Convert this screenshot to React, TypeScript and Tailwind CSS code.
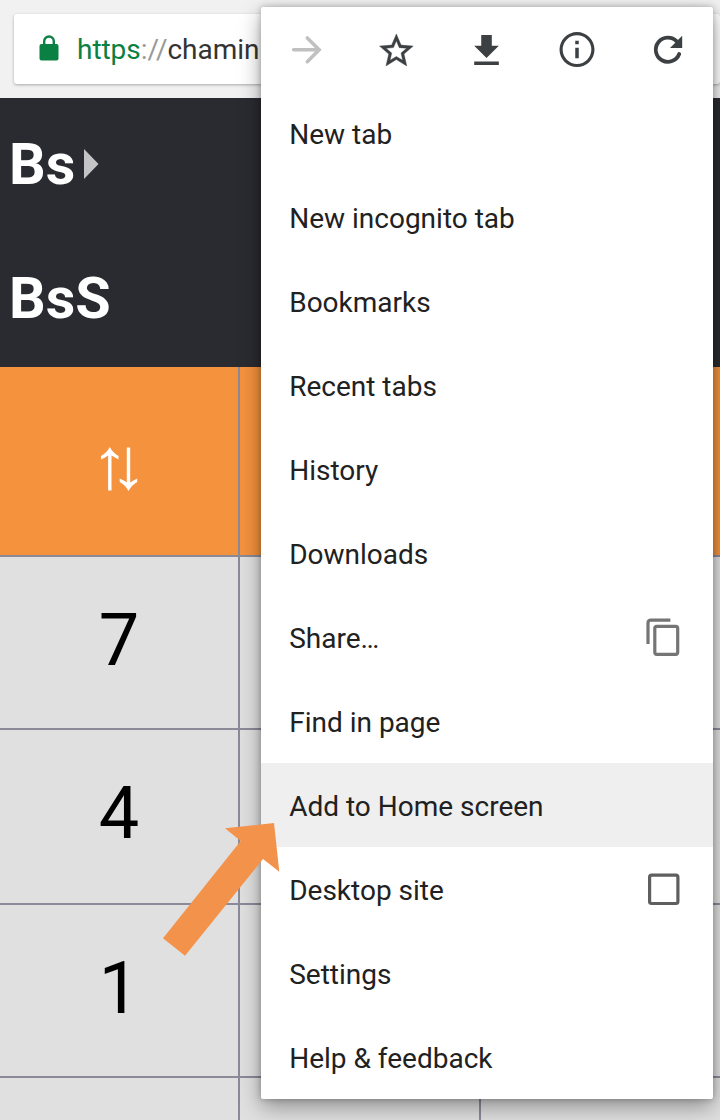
import type { ReactNode } from "react";

const roboto = "font-['Roboto',sans-serif]";

const tools: { label: string; icon: ReactNode }[] = [
  {
    label: "Forward",
    icon: (
      <path d="M8.6 21.8H34M22.3 9.9L34.2 21.8L22.3 33.7" fill="none" stroke="#c0c0c0" strokeWidth="3.5" strokeLinecap="round" />
    ),
  },
  {
    label: "Bookmark",
    icon: (
      <path transform="translate(.2 2.6) scale(1.68)" fill="#3c4043" stroke="#3c4043" strokeWidth=".25" d="M22 9.24l-7.19-.62L12 2 9.19 8.63 2 9.24l5.46 4.73L5.82 21 12 17.27 18.18 21l-1.63-7.03L22 9.24zM12 15.4l-3.76 2.27 1-4.28-3.32-2.88 4.38-.38L12 6.1l1.71 4.04 4.38.38-3.32 2.88 1 4.28L12 15.4z" />
    ),
  },
  {
    label: "Download",
    icon: <path transform="translate(-.6 1.8) scale(1.76)" fill="#3c4043" d="M19 9h-4V3H9v6H5l7 7 7-7zM5 18v2h14v-2H5z" />,
  },
  {
    label: "Page info",
    icon: (
      <g transform="translate(0 .6) scale(1.75)" fill="#3c4043">
        <path d="M11 7h2v2h-2zM11 11h2v6h-2zM12 2a10 10 0 1 0 0 20 10 10 0 0 0 0-20zm0 18.2a8.2 8.2 0 1 1 0-16.4 8.2 8.2 0 0 1 0 16.4z" />
      </g>
    ),
  },
  {
    label: "Refresh",
    icon: (
      <>
        <path d="M32.2 26A12.1 12.1 0 1 1 29.7 13.4" fill="none" stroke="#3c4043" strokeWidth="3.8" strokeLinecap="round" />
        <path d="M35.2 7.7V19.9H23z" fill="#3c4043" />
      </>
    ),
  },
];

const items = [
  "New tab",
  "New incognito tab",
  "Bookmarks",
  "Recent tabs",
  "History",
  "Downloads",
  "Share…",
  "Find in page",
  "Add to Home screen",
  "Desktop site",
  "Settings",
  "Help & feedback",
];

function ItemIcon({ item }: { item: string }) {
  if (item === "Share…")
    return (
      <svg className="h-10 w-9" viewBox="0 0 36 40" fill="none" stroke="#757575" strokeWidth="3.2">
        <path d="M3 27V6Q3 3.1 5.9 3.1H25.4" />
        <rect x="9.8" y="9.3" width="22.9" height="28" rx="2" />
      </svg>
    );
  if (item === "Desktop site")
    return (
      <svg className="h-10 w-9" viewBox="0 0 36 40" fill="none" stroke="#5f5f5f" strokeWidth="3.2">
        <rect x="4.6" y="6.2" width="28.3" height="28.3" rx="2" />
      </svg>
    );
  return null;
}

function Menu() {
  return (
    <div className="absolute left-[261px] top-[7px] h-[1092px] w-[452px] rounded-[2px] bg-white shadow-[0_8px_22px_rgba(0,0,0,0.36),0_0_6px_rgba(0,0,0,0.25)]">
      <div className="grid h-[84px] grid-cols-5">
        {tools.map((t) => (
          <button key={t.label} aria-label={t.label} className="flex items-center justify-center">
            <svg className="h-[42px] w-[42px]" viewBox="0 0 42 42">
              {t.icon}
            </svg>
          </button>
        ))}
      </div>
      {items.map((item) => (
        <div
          key={item}
          className={`flex h-[84px] items-center justify-between pl-[28.2px] pr-[32px] text-[28px] text-[#212121] ${item === "Add to Home screen" ? "bg-[#efefef]" : ""}`}
        >
          <span className="pt-1">{item}</span>
          <ItemIcon item={item} />
        </div>
      ))}
    </div>
  );
}

const line = "border-[#8b8a99]";

function Row({ height, children, header }: { height: string; children?: ReactNode; header?: boolean }) {
  return (
    <div className={`grid shrink-0 grid-cols-[240px_241px_1fr] border-b-2 ${line} ${height} ${header ? "bg-[#f5923e]" : "bg-[#e0e0e0]"}`}>
      <div className={`flex items-center justify-center border-r-2 text-[72px] leading-none text-black ${line}`}>
        {children}
      </div>
      <div className={`border-r-2 ${header ? "border-transparent" : line}`} />
      <div />
    </div>
  );
}

export default function App() {
  return (
    <div className={`relative flex h-[1120px] w-[720px] flex-col overflow-hidden bg-[#e0e0e0] ${roboto}`}>
      <div className="h-[98px] shrink-0 bg-[#f1f1f1] pl-[14px] pt-[14px]">
        <div className="flex h-[70px] items-center rounded-[3px] bg-white pl-[25px] shadow-[0_1px_3px_rgba(0,0,0,0.3)]">
          <svg className="mb-[3px] h-[26px] w-5" viewBox="0 0 20 26">
            <rect x="0.5" y="9" width="19" height="16.5" rx="2" fill="#0b8043" />
            <path d="M5.2 10V6.3a4.8 4.8 0 0 1 9.6 0V10" fill="none" stroke="#0b8043" strokeWidth="2.4" />
          </svg>
          <span className="ml-[18px] whitespace-nowrap pt-[2px] text-[28px] tracking-[-0.04px] text-[#333]">
            <span className="text-[#0b8043]">https</span>
            <span className="text-[#999]">://</span>chamin
          </span>
        </div>
      </div>
      <div className="flex h-[269px] shrink-0 flex-col bg-[#2a2b30] pl-[9px] text-[57.5px] font-bold leading-none text-white">
        <div className="flex h-[133px] items-center">
          <span>Bs</span>
          <svg className="ml-[9px] h-[30px] w-[15px]" viewBox="0 0 15 30">
            <path d="M0 0L14.5 15L0 30z" fill="#c4c4c7" />
          </svg>
        </div>
        <div className="flex h-[137px] items-center">BsS</div>
      </div>
      <Row height="h-[190px]" header>
        <svg className="mt-[15px] h-[44px] w-[38px]" viewBox="0 0 38 44" fill="#fff">
          <path d="M9.8 0Q13 6 18.5 9V12.5Q14 10 11.5 8.5V43.5H8.1V8.5Q5.5 10.5 1 12.5V9Q6.7 6 9.8 0z" />
          <path d="M28.5 44Q31.7 38 37.2 35V31.5Q32.7 34 30.2 35.5V.5H26.8V35.5Q24.2 33.5 19.7 31.5V35Q25.4 38 28.5 44z" />
        </svg>
      </Row>
      <Row height="h-[173px]"><span className="pb-[4px]">7</span></Row>
      <Row height="h-[175px]"><span className="pb-[6px]">4</span></Row>
      <Row height="h-[173px]"><span className="pb-[4px]">1</span></Row>
      <Row height="h-[174px]" />
      <Menu />
      <svg className="absolute left-[163px] top-[822px] h-[134px] w-[117px]" viewBox="163 822 117 134">
        <path d="M274 823L279.3 871.7L263 859L185 955.7L163 938.3L240.7 841L225 828.3z" fill="#f3924a" />
      </svg>
    </div>
  );
}
